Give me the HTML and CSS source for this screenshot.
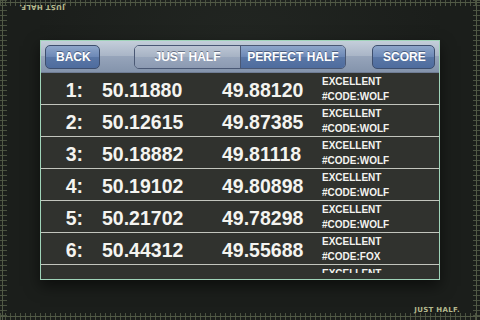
FILE: index.html
```html
<!DOCTYPE html>
<html lang="en">
<head>
    <meta charset="UTF-8">
    <meta name="viewport" content="width=device-width, initial-scale=1.0">
    <title>Just Half - Results</title>
    <link rel="stylesheet" href="styles.css">
</head>
<body>
    <div class="tag tag-top">JUST HALF.</div>
    <section class="panel">
        <div class="toolbar">
            <button class="btn back">BACK</button>
            <div class="segmented">
                <button class="seg">JUST HALF</button>
                <button class="seg active">PERFECT HALF</button>
            </div>
            <button class="btn score">SCORE</button>
        </div>
        <div class="list">
            <div class="row">
                <span class="idx">1:</span>
                <span class="num">50.11880</span>
                <span class="num">49.88120</span>
                <span class="note">EXCELLENT<br>#CODE:WOLF</span>
            </div>
            <div class="row">
                <span class="idx">2:</span>
                <span class="num">50.12615</span>
                <span class="num">49.87385</span>
                <span class="note">EXCELLENT<br>#CODE:WOLF</span>
            </div>
            <div class="row">
                <span class="idx">3:</span>
                <span class="num">50.18882</span>
                <span class="num">49.81118</span>
                <span class="note">EXCELLENT<br>#CODE:WOLF</span>
            </div>
            <div class="row">
                <span class="idx">4:</span>
                <span class="num">50.19102</span>
                <span class="num">49.80898</span>
                <span class="note">EXCELLENT<br>#CODE:WOLF</span>
            </div>
            <div class="row">
                <span class="idx">5:</span>
                <span class="num">50.21702</span>
                <span class="num">49.78298</span>
                <span class="note">EXCELLENT<br>#CODE:WOLF</span>
            </div>
            <div class="row">
                <span class="idx">6:</span>
                <span class="num">50.44312</span>
                <span class="num">49.55688</span>
                <span class="note">EXCELLENT<br>#CODE:FOX</span>
            </div>
            <!-- next row is scrolled mostly out of view -->
            <div class="row">
                <span class="idx"></span>
                <span class="num"></span>
                <span class="num"></span>
                <span class="note">EXCELLENT</span>
            </div>
        </div>
        <div class="list-foot"></div>
    </section>
    <div class="tag tag-bottom">JUST HALF.</div>
</body>
</html>
```

FILE: styles.css
```css
* {
    margin: 0;
    padding: 0;
    box-sizing: border-box;
}

body {
    width: 480px;
    height: 320px;
    overflow: hidden;
    display: grid;
    grid-template-rows: 40px 240px 40px;
    font-family: 'Liberation Sans', Arial, Helvetica, sans-serif;
    color: #f4f4f0;
    background-color: #1b1e1b;
    background-image:
        /* ruler lines */
        linear-gradient(#525a46, #525a46),
        linear-gradient(#525a46, #525a46),
        linear-gradient(#525a46, #525a46),
        linear-gradient(#525a46, #525a46),
        /* ruler ticks */
        repeating-linear-gradient(90deg, #4a5240 0 1px, transparent 1px 5px),
        repeating-linear-gradient(90deg, #4a5240 0 1px, transparent 1px 5px),
        repeating-linear-gradient(180deg, #4a5240 0 1px, transparent 1px 5px),
        repeating-linear-gradient(180deg, #4a5240 0 1px, transparent 1px 5px),
        radial-gradient(ellipse at 50% 20%, #222622 0%, #1b1e1b 60%);
    background-size:
        100% 1px,
        100% 1px,
        1px 100%,
        1px 100%,
        100% 6px,
        100% 7px,
        7px 100%,
        7px 100%,
        100% 100%;
    background-position:
        0 2px,
        0 316px,
        2px 0,
        476px 0,
        0 0,
        0 313px,
        0 0,
        473px 0,
        0 0;
    background-repeat: no-repeat;
}

.tag {
    font-family: 'DejaVu Sans', sans-serif;
    font-size: 7px;
    font-weight: bold;
    line-height: 8px;
    color: #b4b98e;
    letter-spacing: 0.3px;
}

.tag-top {
    justify-self: start;
    align-self: start;
    margin: 3px 0 0 19px;
    transform: rotate(180deg);
}

.tag-bottom {
    justify-self: end;
    align-self: start;
    margin: 26px 20px 0 0;
}

.panel {
    justify-self: center;
    width: 400px;
    height: 240px;
    border: 1px solid #9fd4b9;
    background-color: #30322e;
    display: flex;
    flex-direction: column;
    box-shadow: 0 6px 14px rgba(0, 0, 0, 0.55);
}

.toolbar {
    height: 32px;
    flex: none;
    display: grid;
    grid-template-columns: 1fr auto 1fr;
    align-items: center;
    padding: 0 4px;
    background: linear-gradient(#c4ceda, #a8b4c6 50%, #96a4ba 50%, #8494ac);
    border-bottom: 1px solid #6f7c94;
}

    .toolbar button {
        font-family: inherit;
        font-size: 12px;
        font-weight: bold;
        color: #ffffff;
        text-shadow: 0 -1px 0 rgba(30, 40, 60, 0.5);
        height: 24px;
        cursor: pointer;
    }

.btn {
    padding: 0 10px;
    border: 1px solid #3e4f6e;
    border-radius: 5px;
    background: linear-gradient(#8ea6ca, #6c88b6 50%, #5a77a6 50%, #4e6c9e);
}

.back {
    justify-self: start;
    width: 55px;
}

.score {
    justify-self: end;
    width: 63px;
}

.segmented {
    display: flex;
    border: 1px solid #4a5874;
    border-radius: 5px;
    overflow: hidden;
}

    .segmented .seg {
        height: 22px;
        border: none;
        background: linear-gradient(#bcc6d4, #a6b2c4 50%, #98a6bc 50%, #8c9ab2);
        width: 105px;
    }

        .segmented .seg.active {
            width: 105px;
            border-left: 1px solid #4a5874;
            background: linear-gradient(#8ea6ca, #6c88b6 50%, #5a77a6 50%, #4e6c9e);
        }

.list {
    height: 200px;
    flex: none;
    overflow: hidden;
}

.row {
    height: 32px;
    display: grid;
    grid-template-columns: 42px 120px 100px 1fr;
    align-items: center;
    border-bottom: 1px solid #c2c5bd;
}

.idx, .num {
    font-size: 19.5px;
    font-weight: bold;
    padding-top: 3px;
}

.idx {
    text-align: right;
}

.row .num {
    margin-left: 19px;
}

.note {
    align-self: start;
    padding-top: 1px;
    margin-left: 19px;
    font-size: 10px;
    font-weight: bold;
    line-height: 15px;
}

.list-foot {
    height: 6px;
    flex: none;
}
```
